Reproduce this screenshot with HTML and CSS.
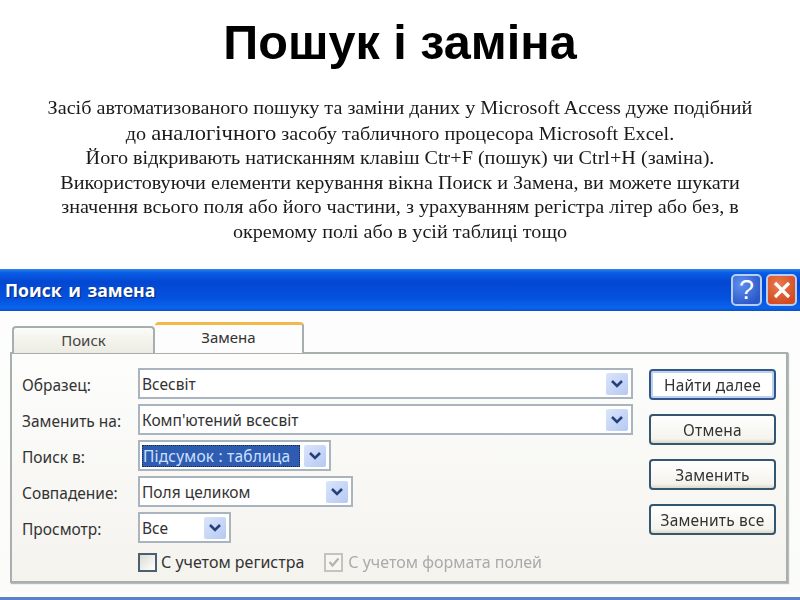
FILE: index.html
```html
<!DOCTYPE html>
<html lang="uk">
<head>
<meta charset="utf-8">
<title>Пошук і заміна</title>
<link rel="stylesheet" href="styles.css">
</head>
<body>
<main class="slide">
  <h1 class="title">Пошук і заміна</h1>
  <p class="intro">Засіб автоматизованого пошуку та заміни даних у Microsoft Access дуже подібний<br>до <span class="intro-large">аналогічного</span> засобу табличного процесора Microsoft Excel.<br>Його відкривають натисканням клавіш Ctr+F (пошук) чи Ctrl+H (заміна).<br>Використовуючи елементи керування вікна Поиск и Замена, ви можете шукати<br>значення всього поля або його частини, з урахуванням регістра літер або без, в<br>окремому полі або в усій таблиці тощо</p>
  <section class="dialog">
    <header class="titlebar">
      <span class="titlebar-text">Поиск и замена</span>
      <div class="window-buttons">
        <span class="win-btn win-help">?</span>
        <span class="win-btn win-close"><svg width="22" height="22" viewBox="0 0 22 22"><path d="M4 4 L18 18 M18 4 L4 18" stroke="#fff" stroke-width="3.2" fill="none"/></svg></span>
      </div>
    </header>
    <div class="dialog-body">
      <div class="tabs">
        <span class="tab">Поиск</span>
        <span class="tab tab-active">Замена</span>
      </div>
      <div class="panel">
        <div class="form">
          <div class="row">
            <label class="label">Образец:</label>
            <div class="combo combo-full"><span class="combo-text">Всесвіт</span><span class="arrow"><svg width="14" height="10" viewBox="0 0 14 10"><path d="M2 2 L7 7 L12 2" stroke="#26407e" stroke-width="2.6" fill="none"/></svg></span></div>
          </div>
          <div class="row">
            <label class="label">Заменить на:</label>
            <div class="combo combo-full"><span class="combo-text">Комп'ютений всесвіт</span><span class="arrow"><svg width="14" height="10" viewBox="0 0 14 10"><path d="M2 2 L7 7 L12 2" stroke="#26407e" stroke-width="2.6" fill="none"/></svg></span></div>
          </div>
          <div class="row">
            <label class="label">Поиск в:</label>
            <div class="combo combo-look"><span class="combo-text combo-selected">Підсумок : таблица</span><span class="arrow"><svg width="14" height="10" viewBox="0 0 14 10"><path d="M2 2 L7 7 L12 2" stroke="#26407e" stroke-width="2.6" fill="none"/></svg></span></div>
          </div>
          <div class="row">
            <label class="label">Совпадение:</label>
            <div class="combo combo-match"><span class="combo-text">Поля целиком</span><span class="arrow"><svg width="14" height="10" viewBox="0 0 14 10"><path d="M2 2 L7 7 L12 2" stroke="#26407e" stroke-width="2.6" fill="none"/></svg></span></div>
          </div>
          <div class="row">
            <label class="label">Просмотр:</label>
            <div class="combo combo-view"><span class="combo-text">Все</span><span class="arrow"><svg width="14" height="10" viewBox="0 0 14 10"><path d="M2 2 L7 7 L12 2" stroke="#26407e" stroke-width="2.6" fill="none"/></svg></span></div>
          </div>
          <div class="checks">
            <span class="check"><span class="box"></span>С учетом регистра</span>
            <span class="check check-disabled"><span class="box box-disabled"><svg width="14" height="14" viewBox="0 0 14 14"><path d="M2.5 7 L5.5 10.5 L11.5 3.5" stroke="#b5b5ad" stroke-width="2.2" fill="none"/></svg></span>С учетом формата полей</span>
          </div>
        </div>
        <div class="actions">
          <button class="btn btn-default">Найти далее</button>
          <button class="btn">Отмена</button>
          <button class="btn">Заменить</button>
          <button class="btn">Заменить все</button>
        </div>
      </div>
    </div>
    <div class="bottom-line"></div>
  </section>
</main>
</body>
</html>
```
FILE: styles.css
```css
* { box-sizing: border-box; }
html, body { margin: 0; padding: 0; background: #fff; }
.slide { width: 800px; height: 600px; overflow: hidden; display: flex; flex-direction: column; }
.title {
  margin: 0;
  padding-top: 13px;
  height: 90px;
  text-align: center;
  font: bold 48.6px/58px "Liberation Sans", Arial, sans-serif;
  color: #000;
  filter: blur(0.35px);
}
.intro {
  margin: 0;
  height: 179px;
  padding-top: 6px;
  text-align: center;
  font: 18px/24.6px "Liberation Serif", "Times New Roman", serif;
  color: #1a1a1a;
  transform: scaleX(1.12);
  white-space: nowrap;
  filter: blur(0.4px);
}
.intro-large { font-size: 1.12em; }
.dialog {
  flex: 1;
  display: flex;
  flex-direction: column;
  font-family: "Noto Sans", Tahoma, sans-serif;
  filter: blur(0.55px);
}
.titlebar {
  height: 42px;
  display: flex;
  align-items: center;
  justify-content: space-between;
  padding: 0 3px 0 5px;
  background: linear-gradient(#2f86ee 0, #0a5fe6 8%, #0347d2 30%, #0452de 70%, #0a63ec 92%, #0a52c8 100%);
}
.titlebar-text {
  color: #fff;
  font: bold 17.6px/24px "Open Sans", sans-serif;
  word-spacing: 2px;
  text-shadow: 1px 1px 1px #0a2a80;
}
.window-buttons { display: flex; gap: 4px; }
.win-btn {
  width: 31px;
  height: 32px;
  border: 2px solid #b8cdf2;
  border-radius: 5px;
  display: flex;
  align-items: center;
  justify-content: center;
}
.win-help {
  background: radial-gradient(circle at 30% 30%, #5f8ff0, #2a58c8 80%);
  color: #fff;
  font: 27px/28px "Liberation Sans", sans-serif;
}
.win-close { background: radial-gradient(circle at 40% 30%, #ea7a4c, #d24a20 80%); }
.dialog-body {
  flex: 1;
  background: linear-gradient(#fdfdfd, #fbfbf9);
  padding: 11px 12px 14px 10px;
  display: flex;
  flex-direction: column;
}
.tabs { display: flex; padding-left: 2px; margin-bottom: -1px; align-items: flex-end; position: relative; z-index: 1; }
.tab {
  width: 143px;
  height: 27px;
  text-align: center;
  font-size: 15px;
  line-height: 24px;
  color: #444;
  background: linear-gradient(#fbfbf8, #ecebe3);
  border: 2px solid #a6aeb0;
  border-bottom: 0;
  border-radius: 4px 4px 0 0;
}
.tab-active {
  width: 149px;
  height: 31px;
  line-height: 25px;
  color: #333;
  background: #fdfdfd;
  border-top: 3px solid #f2b84a;
  border-left: 0;
}
.panel {
  flex: 1;
  display: flex;
  gap: 16px;
  padding: 14px 10px 0 10px;
  border: 2px solid #a8afaf;
  background: linear-gradient(#fdfdfc, #f4f3ee);
  box-shadow: 1px 1px 1px #bbb;
}
.form { width: 623px; display: flex; flex-direction: column; gap: 5px; }
.row { display: flex; align-items: center; height: 31px; }
.label { width: 116px; flex: none; font-size: 15.5px; color: #333; padding-top: 2px; white-space: nowrap; }
.combo {
  height: 31px;
  display: flex;
  align-items: center;
  justify-content: space-between;
  padding: 0 3px 0 2px;
  background: #fff;
  border: 2px solid #a9b4be;
  font-size: 15.5px;
  color: #333;
}
.combo-full { width: 495px; }
.combo-look { width: 193px; }
.combo-match { width: 215px; }
.combo-view { width: 93px; }
.combo-text { white-space: nowrap; line-height: 22px; }
.combo-selected {
  background: #2d5cb0;
  color: #cfe0ff;
  flex: 1;
  margin-right: 4px;
  border: 1px dotted #1a2a50;
  line-height: 20px;
  letter-spacing: 0.2px;
}
.arrow {
  flex: none;
  width: 22px;
  height: 22px;
  border-radius: 2px;
  background: linear-gradient(135deg, #dbe5fb, #b5c9f2);
  display: flex;
  align-items: center;
  justify-content: center;
}
.checks { display: flex; gap: 20px; margin: 2px 0 0 116px; height: 24px; align-items: center; font-size: 16px; color: #333; }
.check { display: flex; align-items: center; gap: 4px; white-space: nowrap; }
.check-disabled { color: #aaa; gap: 5px; }
.box {
  width: 19px;
  height: 19px;
  border: 2px solid #4a6070;
  background: linear-gradient(135deg, #dcdcd4, #fff);
  display: flex;
  align-items: center;
  justify-content: center;
}
.box-disabled { border-color: #c4c4bc; background: #f6f6f2; }
.actions { flex: none; display: flex; flex-direction: column; gap: 14px; padding-top: 1px; }
.btn {
  width: 127px;
  height: 31px;
  padding: 0;
  border: 2px solid #34566e;
  border-radius: 4px;
  background: linear-gradient(#fff, #f4f3ec 85%, #dcd8cc);
  font: 15.5px/20px "Noto Sans", Tahoma, sans-serif;
  letter-spacing: 0.2px;
  color: #333;
}
.btn-default {
  background: #fff;
  box-shadow: inset 0 0 0 2px #bcd0f0;
  border-color: #33558a;
}
.bottom-line { height: 3px; margin: 0; background: #5a82c8; }
```
